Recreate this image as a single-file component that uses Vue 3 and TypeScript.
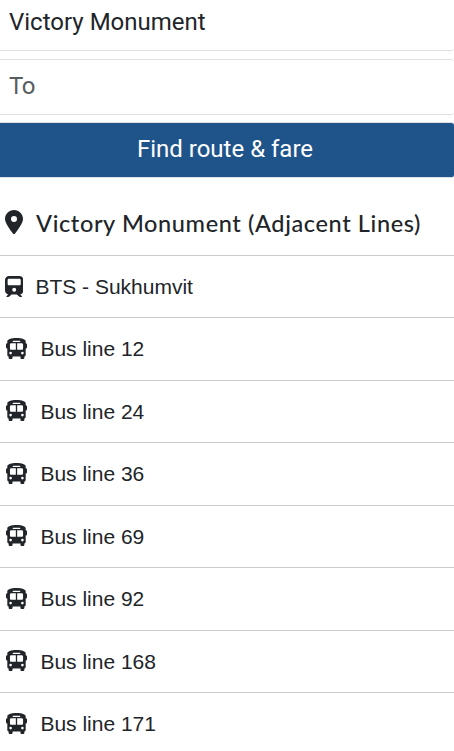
<script setup lang="ts">
import { ref } from 'vue'

interface TransitLine {
  name: string
  kind: 'train' | 'bus'
}

const origin = ref('Victory Monument')
const destination = ref('')

const lines: TransitLine[] = [
  { name: 'BTS - Sukhumvit', kind: 'train' },
  { name: 'Bus line 12', kind: 'bus' },
  { name: 'Bus line 24', kind: 'bus' },
  { name: 'Bus line 36', kind: 'bus' },
  { name: 'Bus line 69', kind: 'bus' },
  { name: 'Bus line 92', kind: 'bus' },
  { name: 'Bus line 168', kind: 'bus' },
  { name: 'Bus line 171', kind: 'bus' },
]
</script>

<template>
  <main class="page">
    <form class="search" @submit.prevent>
      <input v-model="origin" class="field field-from" type="text" aria-label="From" />
      <input v-model="destination" class="field" type="text" placeholder="To" />
      <button class="submit" type="submit">Find route &amp; fare</button>
    </form>

    <h1 class="heading">
      <svg class="pin" viewBox="0 0 384 512" aria-hidden="true">
        <path d="M215.7 499.2C267 435 384 279.4 384 192C384 86 298 0 192 0S0 86 0 192c0 87.4 117 243 168.3 307.2c12.3 15.3 35.1 15.3 47.4 0zM192 128a64 64 0 1 1 0 128 64 64 0 1 1 0-128z" />
      </svg>
      <span class="title">Victory Monument (Adjacent Lines)</span>
    </h1>

    <ul class="lines">
      <li v-for="line in lines" :key="line.name" class="line" :class="line.kind">
        <svg v-if="line.kind === 'train'" class="icon-train" viewBox="0 0 448 512" aria-hidden="true">
          <path d="M96 0C43 0 0 43 0 96V352c0 48 35.2 87.7 81.1 94.9l-46 46C28.1 499.9 33.1 512 43 512H82.7c8.5 0 16.6-3.4 22.6-9.4L160 448H288l54.6 54.6c6 6 14.1 9.4 22.6 9.4H405c10 0 15-12.1 7.9-19.1l-46-46c46-7.1 81.1-46.9 81.1-94.9V96c0-53-43-96-96-96H96zM64 96c0-17.7 14.3-32 32-32H352c17.7 0 32 14.3 32 32v96c0 17.7-14.3 32-32 32H96c-17.7 0-32-14.3-32-32V96zM224 288a48 48 0 1 1 0 96 48 48 0 1 1 0-96z" />
        </svg>
        <svg v-else class="icon-bus" viewBox="0 0 512 512" aria-hidden="true">
          <path d="M256 0C390.4 0 480 35.2 480 80V96l0 32c17.7 0 32 14.3 32 32v64c0 17.7-14.3 32-32 32l0 160c0 17.7-14.3 32-32 32v32c0 17.7-14.3 32-32 32H384c-17.7 0-32-14.3-32-32V448H160v32c0 17.7-14.3 32-32 32l-32 0c-17.7 0-32-14.3-32-32l0-32c-17.7 0-32-14.3-32-32l0-160c-17.7 0-32-14.3-32-32V160c0-17.7 14.3-32 32-32h0V96h0V80C32 35.2 121.6 0 256 0zM96 160v96c0 17.7 14.3 32 32 32H240V128H128c-17.7 0-32 14.3-32 32zM272 288H384c17.7 0 32-14.3 32-32V160c0-17.7-14.3-32-32-32H272V288zM112 400a32 32 0 1 0 0-64 32 32 0 1 0 0 64zm288 0a32 32 0 1 0 0-64 32 32 0 1 0 0 64zM352 80c0-8.8-7.2-16-16-16H176c-8.8 0-16 7.2-16 16s7.2 16 16 16H336c8.8 0 16-7.2 16-16z" />
        </svg>
        <span>{{ line.name }}</span>
      </li>
    </ul>
  </main>
</template>

<style>
body {
  margin: 0;
  background: #fff;
  overflow: hidden;
}
</style>

<style scoped>
.page {
  height: 751px;
  overflow: hidden;
  color: #212529;
  font-family: 'Liberation Sans', Arial, sans-serif;
}

.search {
  display: flex;
  flex-direction: column;
  gap: 8px;
}

.field {
  box-sizing: border-box;
  width: 100%;
  height: 56px;
  padding: 0 9px 2px;
  border: solid #dee2e6;
  border-width: 1px 0;
  border-radius: 0 3px 3px 0;
  outline: 0;
  background: #fff;
  color: #212529;
  font: 400 24px/36px Roboto, sans-serif;
}

.field-from {
  height: 51px;
  border-top: 0;
  padding-bottom: 7px;
}

.field::placeholder {
  color: #595c5f;
  letter-spacing: -0.5px;
  opacity: 1;
}

.submit {
  box-sizing: border-box;
  width: 100%;
  height: 56px;
  margin: -1px 0 0;
  padding: 0 4px 2px 0;
  border: solid #dee2e6;
  border-width: 1px 0;
  border-radius: 0 3px 3px 0;
  background: #1f548b;
  color: #fff;
  font: 400 24px/36px Roboto, sans-serif;
}

.heading {
  display: flex;
  align-items: center;
  gap: 13px;
  height: 63.8px;
  margin: 13px 0 0;
  padding-left: 5px;
  font: 500 23.5px/30px Lato, sans-serif;
}

.title {
  white-space: nowrap;
  letter-spacing: 0.62px;
}

svg {
  flex: none;
  fill: currentColor;
}

.pin {
  width: 18px;
  height: 24px;
  margin-bottom: 2px;
}

.lines {
  margin: 0;
  padding: 0;
  list-style: none;
}

.line {
  box-sizing: border-box;
  display: flex;
  align-items: center;
  height: 62.5px;
  border-top: 1px solid #cbccce;
  font-size: 21px;
  line-height: 32px;
  white-space: nowrap;
}

.train {
  gap: 12px;
  padding-left: 5px;
}

.bus {
  gap: 13px;
  padding-left: 6.4px;
}

.icon-train {
  width: 18.4px;
  height: 21px;
  margin-bottom: 1px;
}

.icon-bus {
  width: 21px;
  height: 21px;
  margin-bottom: 2px;
}
</style>
